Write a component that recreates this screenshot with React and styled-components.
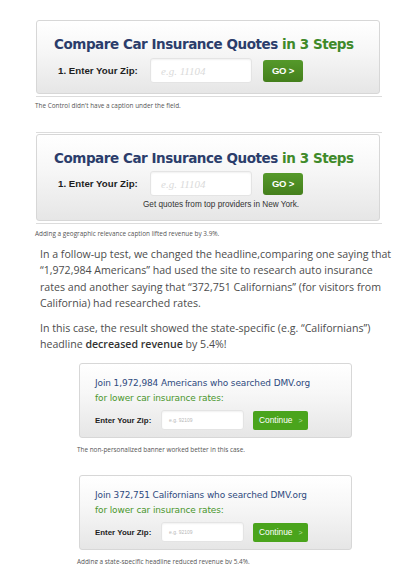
import React from 'react'
import styled, { createGlobalStyle } from 'styled-components'

// Global
const GlobalStyle = createGlobalStyle`
  html, body { margin: 0; padding: 0; background: #fff; }
  body { font-family: 'Open Sans', 'Liberation Sans', sans-serif; }
`

const Page = styled.div`
  width: 414px;
  padding-top: 20px;
  box-sizing: border-box;
`

// Figures
const Figure = styled.div`
  margin-left: ${p => p.left}px;
  width: ${p => p.width}px;
  padding-top: ${p => p.top || 0}px;
`

const Rule = styled.div`
  height: 1px;
  background: #dcdcdc;
  width: calc(100% + 2px);
  margin: ${p => p.m || '0'};
`

const Caption = styled.div`
  font-family: 'Open Sans', sans-serif;
  font-size: 6.4px;
  line-height: 9px;
  color: #555;
  margin-left: ${p => p.shift || 0}px;
  margin-top: ${p => p.top || 4}px;
  white-space: nowrap;
`

// Big banner (Compare Car Insurance...)
const Banner = styled.div`
  box-sizing: border-box;
  height: ${p => p.h}px;
  border: 1px solid #d7d7d7;
  border-radius: 3px;
  background: linear-gradient(#ffffff 0%, #f7f7f7 40%, #e6e6e6 100%);
  padding: ${p => p.pad};
  display: flex;
  flex-direction: column;
`

const Title = styled.div`
  font-family: 'DejaVu Sans', Verdana, sans-serif;
  font-weight: bold;
  font-size: 13.5px;
  line-height: 18px;
  letter-spacing: -0.45px;
  color: #2b3d6b;
  white-space: nowrap;
  span { color: #3f8a2a; }
`

const ZipRow = styled.div`
  display: flex;
  align-items: center;
  margin-top: ${p => p.top}px;
  padding-left: ${p => p.indent || 0}px;
`

const ZipLabel = styled.div`
  font-family: 'Liberation Sans', Arial, sans-serif;
  font-weight: bold;
  font-size: ${p => p.size}px;
  color: #1e1e1e;
  width: ${p => p.w}px;
  white-space: nowrap;
`

const ZipInput = styled.div`
  box-sizing: border-box;
  width: ${p => p.w}px;
  height: ${p => p.h}px;
  background: #fff;
  border: 1px solid #e4e4e4;
  border-radius: 3px;
  box-shadow: inset 0 1px 2px rgba(0,0,0,0.06);
  display: flex;
  align-items: center;
  padding-left: ${p => p.pl}px;
  font-family: ${p => p.serif ? "'Liberation Serif', serif" : "'Liberation Sans', Arial, sans-serif"};
  font-style: ${p => p.serif ? 'italic' : 'normal'};
  font-size: ${p => p.fs}px;
  color: ${p => p.serif ? '#dadada' : '#b8b8b8'};
  margin-right: ${p => p.mr}px;
`

const GoButton = styled.div`
  box-sizing: border-box;
  width: 40px;
  height: 22px;
  border-radius: 3px;
  background: linear-gradient(#55992a, #447f1c);
  color: #fff;
  font-family: 'Liberation Sans', Arial, sans-serif;
  font-weight: bold;
  font-size: 9.5px;
  display: flex;
  align-items: center;
  justify-content: center;
  letter-spacing: -0.2px;
`

const ContinueButton = styled.div`
  box-sizing: border-box;
  width: 55px;
  height: 19px;
  border-radius: 2px;
  background: #4aa41c;
  color: #fff;
  font-family: 'Liberation Sans', Arial, sans-serif;
  font-size: 8.4px;
  display: flex;
  align-items: center;
  padding-left: 6px;
  gap: 6px;
  span { color: #b9e0a4; font-size: 7px; }
`

const SubNote = styled.div`
  font-family: 'Liberation Sans', Arial, sans-serif;
  font-size: 8.2px;
  color: #333;
  margin-top: 4px;
  padding-left: 89px;
  white-space: nowrap;
`

// Small banner (Join ...)
const SmallTitle = styled.div`
  font-family: 'DejaVu Sans', Verdana, sans-serif;
  font-size: 8.95px;
  line-height: 15px;
  color: #2e4a7e;
  white-space: nowrap;
  letter-spacing: -0.1px;
  div { color: #49962c; }
`

// Article text
const Text = styled.p`
  font-family: 'Open Sans', sans-serif;
  font-size: 10.6px;
  line-height: 16.4px;
  color: #4d4d4d;
  margin: ${p => p.m};
  padding-left: 40px;
  width: 360px;
`

const Strong = styled.span`
  font-weight: 600;
  color: #333;
`

const BigBanner = ({ note }) => (
  <Banner h={note ? 87 : 74} pad='14px 0 0 17px'>
    <Title>Compare Car Insurance Quotes <span>in 3 Steps</span></Title>
    <ZipRow top={note ? 4 : 5} indent={4}>
      <ZipLabel size={9.7} w={92}>1. Enter Your Zip:</ZipLabel>
      <ZipInput w={102} h={25} pl={10} fs={11} serif mr={11}>e.g. 11104</ZipInput>
      <GoButton>GO &gt;</GoButton>
    </ZipRow>
    {note && <SubNote>Get quotes from top providers in New York.</SubNote>}
  </Banner>
)

const JoinBanner = ({ who }) => (
  <Banner h={75} pad='12px 0 0 15px'>
    <SmallTitle>
      Join {who} who searched DMV.org
      <div>for lower car insurance rates:</div>
    </SmallTitle>
    <ZipRow top={4}>
      <ZipLabel size={7.9} w={66}>Enter Your Zip:</ZipLabel>
      <ZipInput w={83} h={20} pl={7} fs={5} mr={9}>e.g. 92109</ZipInput>
      <ContinueButton>Continue <span>&gt;</span></ContinueButton>
    </ZipRow>
  </Banner>
)

export default function App() {
  return (
    <>
      <GlobalStyle />
      <Page>
        <Figure left={36} width={344}>
          <BigBanner />
          <Rule m='2px 0 0 0' />
          <Caption shift={-1} top={4}>The Control didn't have a caption under the field.</Caption>
        </Figure>
        <Figure left={36} width={344}>
          <Rule m='22px 0 1px 0' />
          <BigBanner note />
          <Rule m='2px 0 0 0' />
          <Caption shift={-1} top={5}>Adding a geographic relevance caption lifted revenue by 3.9%.</Caption>
        </Figure>
        <Text m='8px 0 0 0'>
          In a follow-up test, we changed the headline,comparing one saying that
          “1,972,984 Americans” had used the site to research auto insurance
          rates and another saying that “372,751 Californians” (for visitors from
          California) had researched rates.
        </Text>
        <Text m='8px 0 0 0'>
          In this case, the result showed the state-specific (e.g. “Californians”)
          headline <Strong>decreased revenue</Strong> by 5.4%!
        </Text>
        <Figure left={79} width={273} top={11}>
          <JoinBanner who='1,972,984 Americans' />
          <Caption shift={-2} top={7}>The non-personalized banner worked better in this case.</Caption>
        </Figure>
        <Figure left={79} width={273} top={21}>
          <JoinBanner who='372,751 Californians' />
          <Caption shift={-2} top={7}>Adding a state-specific headline reduced revenue by 5.4%.</Caption>
        </Figure>
      </Page>
    </>
  )
}
